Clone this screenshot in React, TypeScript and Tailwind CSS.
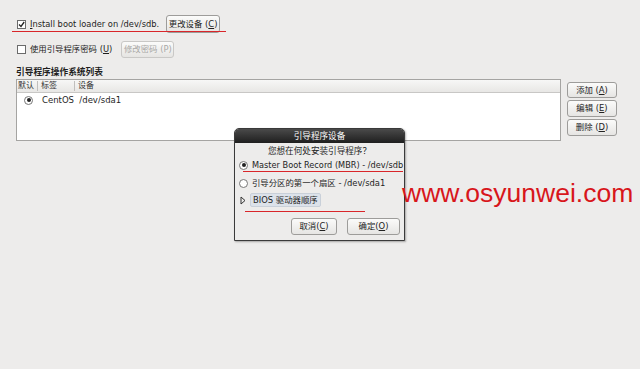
import React from "react";

const FONT = '"DejaVu Sans", "Noto Sans CJK SC", sans-serif';

function Btn({ children, className = "", disabled = false }: { children: React.ReactNode; className?: string; disabled?: boolean }) {
  return (
    <div
      className={
        "flex items-center justify-center whitespace-nowrap rounded-[3px] border bg-gradient-to-b from-[#fbfbfa] to-[#e6e5e3] text-[8.4px] " +
        (disabled ? "border-[#c9c8c6] text-[#a9a8a6]" : "border-[#9d9c9a] text-[#222]") +
        " " +
        className
      }
    >
      {children}
    </div>
  );
}

function Check({ checked }: { checked?: boolean }) {
  return (
    <div className="flex h-[9px] w-[9px] shrink-0 items-center justify-center border border-[#6b6b6b] bg-white">
      {checked && (
        <svg width="7" height="7" viewBox="0 0 7 7">
          <path d="M1 3.5 L3 5.5 L6.2 1" stroke="#222" strokeWidth="1.3" fill="none" />
        </svg>
      )}
    </div>
  );
}

function Radio({ on }: { on?: boolean }) {
  return (
    <div className="flex h-[9px] w-[9px] shrink-0 items-center justify-center rounded-full border border-[#777] bg-white">
      {on && <div className="h-[4px] w-[4px] rounded-full bg-[#222]" />}
    </div>
  );
}

export default function App() {
  return (
    <div
      className="relative h-[369px] w-[640px] overflow-hidden whitespace-nowrap bg-[#edeceb] text-[8.4px] text-[#1e1e1e]"
      style={{ fontFamily: FONT }}
    >
      <div className="flex flex-col pl-[16px] pt-[15px]">
        {/* Row 1 */}
        <div className="flex h-[18px] items-center pl-[1px]">
          <Check checked />
          <span className="ml-[4px] text-[8.3px]">
            <span className="underline">I</span>nstall boot loader on /dev/sdb.
          </span>
          <Btn className="ml-[7px] h-[18px] w-[54px]">
            更改设备 (<span className="underline">C</span>)
          </Btn>
        </div>
        {/* Row 2 */}
        <div className="mt-[8px] flex h-[17px] items-center pl-[1px]">
          <Check />
          <span className="ml-[4px]">
            使用引导程序密码 (<span className="underline">U</span>)
          </span>
          <Btn disabled className="ml-[9px] h-[17px] w-[53px]">
            修改密码 (P)
          </Btn>
        </div>
        {/* heading */}
        <div className="mt-[7px] text-[8.7px] font-bold leading-[14px]">引导程序操作系统列表</div>
        {/* Table + buttons */}
        <div className="flex">
          <div className="h-[62px] w-[545px] border border-[#a5a4a2] bg-white">
            <div className="flex h-[13px] items-center border-b border-[#c8c7c5] bg-gradient-to-b from-[#f7f7f6] to-[#e8e7e5] text-[8px] text-[#333]">
              <span className="w-[20px] pl-[1px]">默认</span>
              <span className="h-[10px] border-l border-[#c0bfbd]" />
              <span className="w-[36px] pl-[3px]">标签</span>
              <span className="h-[10px] border-l border-[#c0bfbd]" />
              <span className="pl-[3px]">设备</span>
            </div>
            <div className="flex h-[14px] items-center pl-[7px]">
              <Radio on />
              <span className="ml-[9px] text-[8.5px]">CentOS&nbsp;&nbsp;/dev/sda1</span>
            </div>
          </div>
          <div className="ml-[6px] mt-[3px] flex flex-col gap-[2px]">
            <Btn className="h-[16px] w-[50px]">
              添加 (<span className="underline">A</span>)
            </Btn>
            <Btn className="h-[17px] w-[50px]">
              编辑 (<span className="underline">E</span>)
            </Btn>
            <Btn className="h-[17px] w-[50px]">
              删除 (<span className="underline">D</span>)
            </Btn>
          </div>
        </div>
      </div>

      {/* red annotation line row1 */}
      <div className="absolute left-[12px] top-[31px] h-[1px] w-[214px] bg-[#d9262a]" />

      {/* Dialog */}
      <div className="absolute left-[234px] top-[128px] flex h-[113px] w-[171px] flex-col overflow-hidden rounded-t-[5px] border border-[#3a3a3a] bg-[#edeceb] shadow-[1px_1px_2px_rgba(0,0,0,0.3)]">
        <div className="flex h-[14px] shrink-0 items-center justify-center bg-gradient-to-b from-[#4a4a4a] to-[#1f1f1f] text-[8.6px] text-white">
          引导程序设备
        </div>
        <div className="mt-[1px] text-center text-[8.6px] leading-[12px]">
          您想在何处安装引导程序<span style={{ fontFamily: '"Noto Sans CJK SC", sans-serif' }}>？</span>
        </div>
        <div className="mt-[1px] flex h-[14px] items-center pl-[4px]">
          <Radio on />
          <span className="ml-[4px] text-[8.2px]">Master Boot Record (MBR) - /dev/sdb</span>
        </div>
        <div className="mt-[4px] flex h-[14px] items-center pl-[4px]">
          <Radio />
          <span className="ml-[4px]">引导分区的第一个扇区 - /dev/sda1</span>
        </div>
        <div className="mt-[2px] flex h-[16px] items-center pl-[5px]">
          <svg width="6" height="9" viewBox="0 0 6 9">
            <path d="M1 1 L5 4.5 L1 8 Z" stroke="#333" strokeWidth="1" fill="none" />
          </svg>
          <div className="ml-[4px] flex h-[14px] items-center rounded-[2px] border border-[#c9d0d9] bg-[#dce2ea] px-[2px] text-[8.4px]">
            BIOS 驱动器顺序
          </div>
        </div>
        <div className="mb-[5px] mt-auto flex justify-end gap-[10px] pr-[4px]">
          <Btn className="h-[17px] w-[46px]">
            取消(<span className="underline">C</span>)
          </Btn>
          <Btn className="h-[17px] w-[53px]">
            确定(<span className="underline">O</span>)
          </Btn>
        </div>
      </div>

      {/* red annotation lines in dialog */}
      <div className="absolute left-[243px] top-[171px] h-[1px] w-[160px] bg-[#d9262a]" />
      <div className="absolute left-[245px] top-[211px] h-[1px] w-[120px] bg-[#d9262a]" />

      {/* watermark */}
      <div
        className="absolute left-[402px] top-[178px] text-[26.5px] leading-[30px] text-[#d8161b]"
        style={{ fontFamily: '"Liberation Sans", Arial, sans-serif' }}
      >
        www.osyunwei.com
      </div>
    </div>
  );
}
